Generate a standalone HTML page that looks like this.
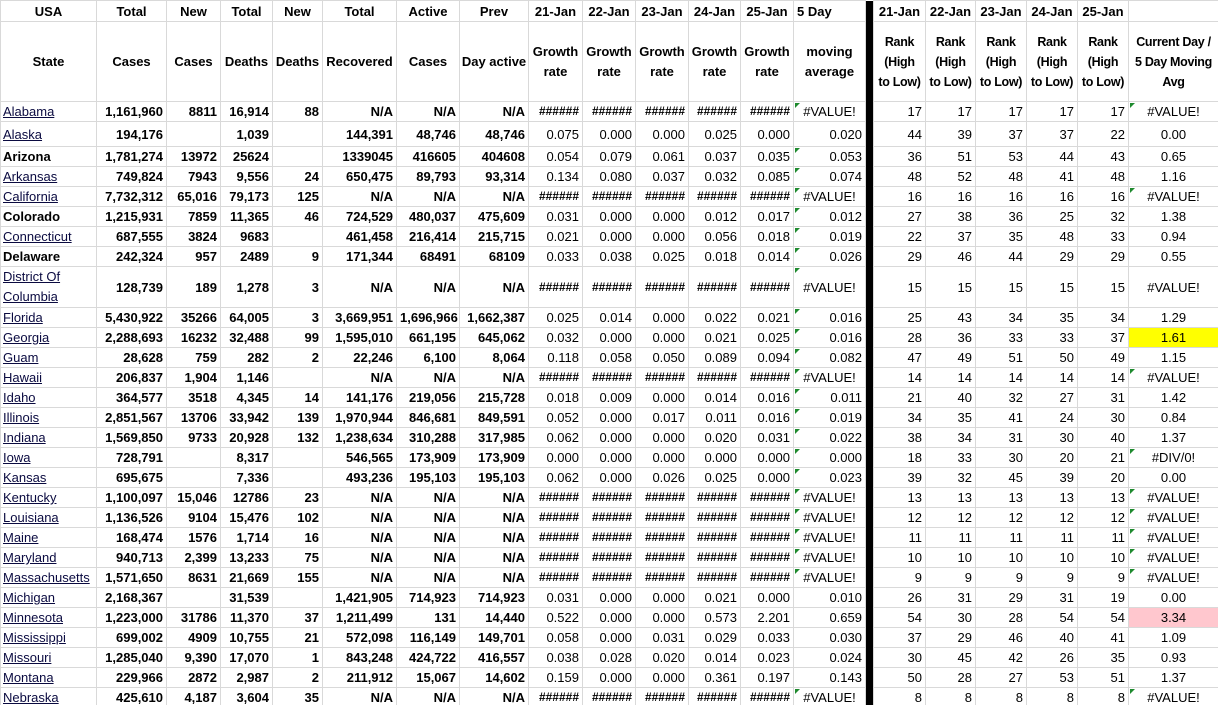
<!DOCTYPE html>
<html><head><meta charset="utf-8">
<style>
html,body{margin:0;padding:0;background:#fff;width:1218px;height:705px;overflow:hidden}
table{border-collapse:collapse;table-layout:fixed;width:1218px;font-family:"Liberation Sans",Arial,sans-serif;font-size:13px;color:#000}
td{border:1px solid #d9d9d9;padding:0 3px;white-space:nowrap;overflow:hidden;text-align:right;vertical-align:middle;font-weight:bold;height:19px;line-height:19px;position:relative}
td.s{text-align:left;font-weight:normal;text-decoration:underline;color:#0a0a40;padding-left:2px}
td.sb{text-align:left;text-decoration:none;color:#000;font-weight:bold;padding-left:2px}
td.n{font-weight:normal}
td.h{font-size:12px}
td.c{text-align:center;font-weight:normal}
td.x{background:#000;border:none;padding:0}
tr.hd td{text-align:center;font-weight:bold}
tr.h2 td{line-height:20px;height:79px;white-space:nowrap;padding:0}
tr.h2 td.r{font-size:12.5px;letter-spacing:-0.3px}
tr.h2 td.cd{font-size:12.5px;letter-spacing:-0.3px}
td.t::before{content:"";position:absolute;left:1px;top:1px;border-top:5px solid #1e8a2e;border-right:5px solid transparent}
.y{background:#ffff00}.p{background:#ffc7ce}
</style></head><body>
<table>
<colgroup><col style="width:96px"><col style="width:70px"><col style="width:54px"><col style="width:52px"><col style="width:50px"><col style="width:74px"><col style="width:63px"><col style="width:69px"><col style="width:54px"><col style="width:53px"><col style="width:53px"><col style="width:52px"><col style="width:53px"><col style="width:72px"><col style="width:8px"><col style="width:52px"><col style="width:50px"><col style="width:51px"><col style="width:51px"><col style="width:51px"><col style="width:90px"></colgroup>
<tr class="hd" style="height:21px"><td>USA</td><td>Total</td><td>New</td><td>Total</td><td>New</td><td>Total</td><td>Active</td><td>Prev</td><td>21-Jan</td><td>22-Jan</td><td>23-Jan</td><td>24-Jan</td><td>25-Jan</td><td style="text-align:left">5 Day</td><td class="x"></td><td>21-Jan</td><td>22-Jan</td><td>23-Jan</td><td>24-Jan</td><td>25-Jan</td><td></td></tr>
<tr class="hd h2"><td>State</td><td>Cases</td><td>Cases</td><td>Deaths</td><td>Deaths</td><td>Recovered</td><td>Cases</td><td>Day active</td><td>Growth<br>rate</td><td>Growth<br>rate</td><td>Growth<br>rate</td><td>Growth<br>rate</td><td>Growth<br>rate</td><td>moving<br>average</td><td class="x"></td><td class="r">Rank<br>(High<br>to Low)</td><td class="r">Rank<br>(High<br>to Low)</td><td class="r">Rank<br>(High<br>to Low)</td><td class="r">Rank<br>(High<br>to Low)</td><td class="r">Rank<br>(High<br>to Low)</td><td class="cd">Current Day /<br>5 Day Moving<br>Avg</td></tr>
<tr><td class="s">Alabama</td><td>1,161,960</td><td>8811</td><td>16,914</td><td>88</td><td>N/A</td><td>N/A</td><td>N/A</td><td class="h">######</td><td class="h">######</td><td class="h">######</td><td class="h">######</td><td class="h">######</td><td class="c t">#VALUE!</td><td class="x"></td><td class="n">17</td><td class="n">17</td><td class="n">17</td><td class="n">17</td><td class="n">17</td><td class="c t">#VALUE!</td></tr>
<tr style="height:25px"><td class="s">Alaska</td><td>194,176</td><td></td><td>1,039</td><td></td><td>144,391</td><td>48,746</td><td>48,746</td><td class="n">0.075</td><td class="n">0.000</td><td class="n">0.000</td><td class="n">0.025</td><td class="n">0.000</td><td class="n">0.020</td><td class="x"></td><td class="n">44</td><td class="n">39</td><td class="n">37</td><td class="n">37</td><td class="n">22</td><td class="c">0.00</td></tr>
<tr><td class="s sb">Arizona</td><td>1,781,274</td><td>13972</td><td>25624</td><td></td><td>1339045</td><td>416605</td><td>404608</td><td class="n">0.054</td><td class="n">0.079</td><td class="n">0.061</td><td class="n">0.037</td><td class="n">0.035</td><td class="n t">0.053</td><td class="x"></td><td class="n">36</td><td class="n">51</td><td class="n">53</td><td class="n">44</td><td class="n">43</td><td class="c">0.65</td></tr>
<tr><td class="s">Arkansas</td><td>749,824</td><td>7943</td><td>9,556</td><td>24</td><td>650,475</td><td>89,793</td><td>93,314</td><td class="n">0.134</td><td class="n">0.080</td><td class="n">0.037</td><td class="n">0.032</td><td class="n">0.085</td><td class="n t">0.074</td><td class="x"></td><td class="n">48</td><td class="n">52</td><td class="n">48</td><td class="n">41</td><td class="n">48</td><td class="c">1.16</td></tr>
<tr><td class="s">California</td><td>7,732,312</td><td>65,016</td><td>79,173</td><td>125</td><td>N/A</td><td>N/A</td><td>N/A</td><td class="h">######</td><td class="h">######</td><td class="h">######</td><td class="h">######</td><td class="h">######</td><td class="c t">#VALUE!</td><td class="x"></td><td class="n">16</td><td class="n">16</td><td class="n">16</td><td class="n">16</td><td class="n">16</td><td class="c t">#VALUE!</td></tr>
<tr><td class="s sb">Colorado</td><td>1,215,931</td><td>7859</td><td>11,365</td><td>46</td><td>724,529</td><td>480,037</td><td>475,609</td><td class="n">0.031</td><td class="n">0.000</td><td class="n">0.000</td><td class="n">0.012</td><td class="n">0.017</td><td class="n t">0.012</td><td class="x"></td><td class="n">27</td><td class="n">38</td><td class="n">36</td><td class="n">25</td><td class="n">32</td><td class="c">1.38</td></tr>
<tr><td class="s">Connecticut</td><td>687,555</td><td>3824</td><td>9683</td><td></td><td>461,458</td><td>216,414</td><td>215,715</td><td class="n">0.021</td><td class="n">0.000</td><td class="n">0.000</td><td class="n">0.056</td><td class="n">0.018</td><td class="n t">0.019</td><td class="x"></td><td class="n">22</td><td class="n">37</td><td class="n">35</td><td class="n">48</td><td class="n">33</td><td class="c">0.94</td></tr>
<tr><td class="s sb">Delaware</td><td>242,324</td><td>957</td><td>2489</td><td>9</td><td>171,344</td><td>68491</td><td>68109</td><td class="n">0.033</td><td class="n">0.038</td><td class="n">0.025</td><td class="n">0.018</td><td class="n">0.014</td><td class="n t">0.026</td><td class="x"></td><td class="n">29</td><td class="n">46</td><td class="n">44</td><td class="n">29</td><td class="n">29</td><td class="c">0.55</td></tr>
<tr style="height:40px"><td class="s" style="white-space:normal;line-height:20px">District Of Columbia</td><td>128,739</td><td>189</td><td>1,278</td><td>3</td><td>N/A</td><td>N/A</td><td>N/A</td><td class="h">######</td><td class="h">######</td><td class="h">######</td><td class="h">######</td><td class="h">######</td><td class="c t">#VALUE!</td><td class="x"></td><td class="n">15</td><td class="n">15</td><td class="n">15</td><td class="n">15</td><td class="n">15</td><td class="c">#VALUE!</td></tr>
<tr><td class="s">Florida</td><td>5,430,922</td><td>35266</td><td>64,005</td><td>3</td><td>3,669,951</td><td>1,696,966</td><td>1,662,387</td><td class="n">0.025</td><td class="n">0.014</td><td class="n">0.000</td><td class="n">0.022</td><td class="n">0.021</td><td class="n t">0.016</td><td class="x"></td><td class="n">25</td><td class="n">43</td><td class="n">34</td><td class="n">35</td><td class="n">34</td><td class="c">1.29</td></tr>
<tr><td class="s">Georgia</td><td>2,288,693</td><td>16232</td><td>32,488</td><td>99</td><td>1,595,010</td><td>661,195</td><td>645,062</td><td class="n">0.032</td><td class="n">0.000</td><td class="n">0.000</td><td class="n">0.021</td><td class="n">0.025</td><td class="n t">0.016</td><td class="x"></td><td class="n">28</td><td class="n">36</td><td class="n">33</td><td class="n">33</td><td class="n">37</td><td class="c y">1.61</td></tr>
<tr><td class="s">Guam</td><td>28,628</td><td>759</td><td>282</td><td>2</td><td>22,246</td><td>6,100</td><td>8,064</td><td class="n">0.118</td><td class="n">0.058</td><td class="n">0.050</td><td class="n">0.089</td><td class="n">0.094</td><td class="n t">0.082</td><td class="x"></td><td class="n">47</td><td class="n">49</td><td class="n">51</td><td class="n">50</td><td class="n">49</td><td class="c">1.15</td></tr>
<tr><td class="s">Hawaii</td><td>206,837</td><td>1,904</td><td>1,146</td><td></td><td>N/A</td><td>N/A</td><td>N/A</td><td class="h">######</td><td class="h">######</td><td class="h">######</td><td class="h">######</td><td class="h">######</td><td class="c t">#VALUE!</td><td class="x"></td><td class="n">14</td><td class="n">14</td><td class="n">14</td><td class="n">14</td><td class="n">14</td><td class="c t">#VALUE!</td></tr>
<tr><td class="s">Idaho</td><td>364,577</td><td>3518</td><td>4,345</td><td>14</td><td>141,176</td><td>219,056</td><td>215,728</td><td class="n">0.018</td><td class="n">0.009</td><td class="n">0.000</td><td class="n">0.014</td><td class="n">0.016</td><td class="n t">0.011</td><td class="x"></td><td class="n">21</td><td class="n">40</td><td class="n">32</td><td class="n">27</td><td class="n">31</td><td class="c">1.42</td></tr>
<tr><td class="s">Illinois</td><td>2,851,567</td><td>13706</td><td>33,942</td><td>139</td><td>1,970,944</td><td>846,681</td><td>849,591</td><td class="n">0.052</td><td class="n">0.000</td><td class="n">0.017</td><td class="n">0.011</td><td class="n">0.016</td><td class="n t">0.019</td><td class="x"></td><td class="n">34</td><td class="n">35</td><td class="n">41</td><td class="n">24</td><td class="n">30</td><td class="c">0.84</td></tr>
<tr><td class="s">Indiana</td><td>1,569,850</td><td>9733</td><td>20,928</td><td>132</td><td>1,238,634</td><td>310,288</td><td>317,985</td><td class="n">0.062</td><td class="n">0.000</td><td class="n">0.000</td><td class="n">0.020</td><td class="n">0.031</td><td class="n t">0.022</td><td class="x"></td><td class="n">38</td><td class="n">34</td><td class="n">31</td><td class="n">30</td><td class="n">40</td><td class="c">1.37</td></tr>
<tr><td class="s">Iowa</td><td>728,791</td><td></td><td>8,317</td><td></td><td>546,565</td><td>173,909</td><td>173,909</td><td class="n">0.000</td><td class="n">0.000</td><td class="n">0.000</td><td class="n">0.000</td><td class="n">0.000</td><td class="n t">0.000</td><td class="x"></td><td class="n">18</td><td class="n">33</td><td class="n">30</td><td class="n">20</td><td class="n">21</td><td class="c t">#DIV/0!</td></tr>
<tr><td class="s">Kansas</td><td>695,675</td><td></td><td>7,336</td><td></td><td>493,236</td><td>195,103</td><td>195,103</td><td class="n">0.062</td><td class="n">0.000</td><td class="n">0.026</td><td class="n">0.025</td><td class="n">0.000</td><td class="n t">0.023</td><td class="x"></td><td class="n">39</td><td class="n">32</td><td class="n">45</td><td class="n">39</td><td class="n">20</td><td class="c">0.00</td></tr>
<tr><td class="s">Kentucky</td><td>1,100,097</td><td>15,046</td><td>12786</td><td>23</td><td>N/A</td><td>N/A</td><td>N/A</td><td class="h">######</td><td class="h">######</td><td class="h">######</td><td class="h">######</td><td class="h">######</td><td class="c t">#VALUE!</td><td class="x"></td><td class="n">13</td><td class="n">13</td><td class="n">13</td><td class="n">13</td><td class="n">13</td><td class="c t">#VALUE!</td></tr>
<tr><td class="s">Louisiana</td><td>1,136,526</td><td>9104</td><td>15,476</td><td>102</td><td>N/A</td><td>N/A</td><td>N/A</td><td class="h">######</td><td class="h">######</td><td class="h">######</td><td class="h">######</td><td class="h">######</td><td class="c t">#VALUE!</td><td class="x"></td><td class="n">12</td><td class="n">12</td><td class="n">12</td><td class="n">12</td><td class="n">12</td><td class="c t">#VALUE!</td></tr>
<tr><td class="s">Maine</td><td>168,474</td><td>1576</td><td>1,714</td><td>16</td><td>N/A</td><td>N/A</td><td>N/A</td><td class="h">######</td><td class="h">######</td><td class="h">######</td><td class="h">######</td><td class="h">######</td><td class="c t">#VALUE!</td><td class="x"></td><td class="n">11</td><td class="n">11</td><td class="n">11</td><td class="n">11</td><td class="n">11</td><td class="c t">#VALUE!</td></tr>
<tr><td class="s">Maryland</td><td>940,713</td><td>2,399</td><td>13,233</td><td>75</td><td>N/A</td><td>N/A</td><td>N/A</td><td class="h">######</td><td class="h">######</td><td class="h">######</td><td class="h">######</td><td class="h">######</td><td class="c t">#VALUE!</td><td class="x"></td><td class="n">10</td><td class="n">10</td><td class="n">10</td><td class="n">10</td><td class="n">10</td><td class="c t">#VALUE!</td></tr>
<tr><td class="s">Massachusetts</td><td>1,571,650</td><td>8631</td><td>21,669</td><td>155</td><td>N/A</td><td>N/A</td><td>N/A</td><td class="h">######</td><td class="h">######</td><td class="h">######</td><td class="h">######</td><td class="h">######</td><td class="c t">#VALUE!</td><td class="x"></td><td class="n">9</td><td class="n">9</td><td class="n">9</td><td class="n">9</td><td class="n">9</td><td class="c t">#VALUE!</td></tr>
<tr><td class="s">Michigan</td><td>2,168,367</td><td></td><td>31,539</td><td></td><td>1,421,905</td><td>714,923</td><td>714,923</td><td class="n">0.031</td><td class="n">0.000</td><td class="n">0.000</td><td class="n">0.021</td><td class="n">0.000</td><td class="n">0.010</td><td class="x"></td><td class="n">26</td><td class="n">31</td><td class="n">29</td><td class="n">31</td><td class="n">19</td><td class="c">0.00</td></tr>
<tr><td class="s">Minnesota</td><td>1,223,000</td><td>31786</td><td>11,370</td><td>37</td><td>1,211,499</td><td>131</td><td>14,440</td><td class="n">0.522</td><td class="n">0.000</td><td class="n">0.000</td><td class="n">0.573</td><td class="n">2.201</td><td class="n">0.659</td><td class="x"></td><td class="n">54</td><td class="n">30</td><td class="n">28</td><td class="n">54</td><td class="n">54</td><td class="c p">3.34</td></tr>
<tr><td class="s">Mississippi</td><td>699,002</td><td>4909</td><td>10,755</td><td>21</td><td>572,098</td><td>116,149</td><td>149,701</td><td class="n">0.058</td><td class="n">0.000</td><td class="n">0.031</td><td class="n">0.029</td><td class="n">0.033</td><td class="n">0.030</td><td class="x"></td><td class="n">37</td><td class="n">29</td><td class="n">46</td><td class="n">40</td><td class="n">41</td><td class="c">1.09</td></tr>
<tr><td class="s">Missouri</td><td>1,285,040</td><td>9,390</td><td>17,070</td><td>1</td><td>843,248</td><td>424,722</td><td>416,557</td><td class="n">0.038</td><td class="n">0.028</td><td class="n">0.020</td><td class="n">0.014</td><td class="n">0.023</td><td class="n">0.024</td><td class="x"></td><td class="n">30</td><td class="n">45</td><td class="n">42</td><td class="n">26</td><td class="n">35</td><td class="c">0.93</td></tr>
<tr><td class="s">Montana</td><td>229,966</td><td>2872</td><td>2,987</td><td>2</td><td>211,912</td><td>15,067</td><td>14,602</td><td class="n">0.159</td><td class="n">0.000</td><td class="n">0.000</td><td class="n">0.361</td><td class="n">0.197</td><td class="n">0.143</td><td class="x"></td><td class="n">50</td><td class="n">28</td><td class="n">27</td><td class="n">53</td><td class="n">51</td><td class="c">1.37</td></tr>
<tr><td class="s">Nebraska</td><td>425,610</td><td>4,187</td><td>3,604</td><td>35</td><td>N/A</td><td>N/A</td><td>N/A</td><td class="h">######</td><td class="h">######</td><td class="h">######</td><td class="h">######</td><td class="h">######</td><td class="c t">#VALUE!</td><td class="x"></td><td class="n">8</td><td class="n">8</td><td class="n">8</td><td class="n">8</td><td class="n">8</td><td class="c t">#VALUE!</td></tr>
</table>
</body></html>
